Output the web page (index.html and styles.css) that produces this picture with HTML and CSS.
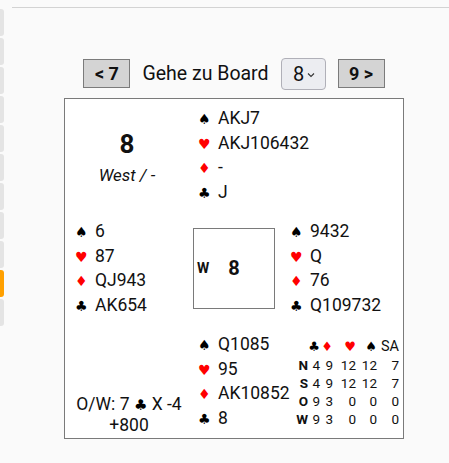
FILE: index.html
```html
<!DOCTYPE html>
<html lang="de">
<head>
<meta charset="utf-8">
<title>Board 8</title>
<link rel="stylesheet" href="styles.css">
</head>
<body>
<div class="page">
  <nav class="tabs">
    <span class="tab"></span><span class="tab"></span><span class="tab"></span><span class="tab"></span><span class="tab"></span>
    <span class="tab"></span><span class="tab"></span><span class="tab"></span><span class="tab"></span>
    <span class="tab active"></span><span class="tab"></span>
  </nav>
  <main class="main">
    <div class="boardnav">
      <button class="navbtn">&lt; 7</button>
      <span class="goto">Gehe zu Board</span>
      <span class="select"><span>8</span><svg class="chev" width="8" height="6" viewBox="0 0 8 6"><path d="M1 1.5 L4 4.5 L7 1.5" fill="none" stroke="#333" stroke-width="1.1"/></svg></span>
      <button class="navbtn">9 &gt;</button>
    </div>
    <div class="board">
      <div class="cell info">
        <div class="bnum">8</div>
        <div class="dealer">West / -</div>
      </div>
      <div class="cell hand north">
        <div class="row"><span class="s blk">♠</span>AKJ7</div>
        <div class="row"><span class="s red">♥</span>AKJ106432</div>
        <div class="row"><span class="s red">♦</span>-</div>
        <div class="row"><span class="s blk">♣</span>J</div>
      </div>
      <div class="cell"></div>

      <div class="cell hand west">
        <div class="row"><span class="s blk">♠</span>6</div>
        <div class="row"><span class="s red">♥</span>87</div>
        <div class="row"><span class="s red">♦</span>QJ943</div>
        <div class="row"><span class="s blk">♣</span>AK654</div>
      </div>
      <div class="cell center">
        <div class="compass">
          <span class="dir">W</span>
          <span class="cnum">8</span>
          <span></span>
        </div>
      </div>
      <div class="cell hand east">
        <div class="row"><span class="s blk">♠</span>9432</div>
        <div class="row"><span class="s red">♥</span>Q</div>
        <div class="row"><span class="s red">♦</span>76</div>
        <div class="row"><span class="s blk">♣</span>Q109732</div>
      </div>

      <div class="cell result">
        <div>O/W: 7 <span class="blk">♣</span> X -4</div>
        <div>+800</div>
      </div>
      <div class="cell hand south">
        <div class="row"><span class="s blk">♠</span>Q1085</div>
        <div class="row"><span class="s red">♥</span>95</div>
        <div class="row"><span class="s red">♦</span>AK10852</div>
        <div class="row"><span class="s blk">♣</span>8</div>
      </div>
      <div class="cell dd">
        <div class="ddgrid">
          <span></span><span class="h blk">♣</span><span class="h red">♦</span><span class="h red">♥</span><span class="h blk">♠</span><span class="h">SA</span>
          <span class="lbl">N</span><span>4</span><span>9</span><span>12</span><span>12</span><span>7</span>
          <span class="lbl">S</span><span>4</span><span>9</span><span>12</span><span>12</span><span>7</span>
          <span class="lbl">O</span><span>9</span><span>3</span><span>0</span><span>0</span><span>0</span>
          <span class="lbl">W</span><span>9</span><span>3</span><span>0</span><span>0</span><span>0</span>
        </div>
      </div>
    </div>
  </main>
</div>
</body>
</html>
```

FILE: styles.css
```css
html, body {
  margin: 0;
  padding: 0;
  background: #fafafa;
  font-family: Roboto, "Liberation Sans", Arial, sans-serif;
  color: #111;
}

.page {
  display: flex;
  width: 449px;
  height: 463px;
  overflow: hidden;
}

.tabs {
  width: 12px;
  flex: none;
  display: flex;
  flex-direction: column;
  gap: 2px;
  padding-top: 9px;
}

.tab {
  display: block;
  width: 4px;
  height: 27px;
  background: #e4e4e4;
  border-radius: 0 3px 3px 0;
}

.tab.active {
  background: #ffa000;
}

.main {
  flex: 1;
  margin-top: 7px;
  border-top: 1px solid #d3d3d3;
  padding-left: 7px;
  display: flex;
  flex-direction: column;
  align-items: center;
}

.boardnav {
  display: flex;
  align-items: center;
  margin-top: 49px;
  height: 33px;
}

.navbtn {
  width: 47px;
  height: 29px;
  padding: 0;
  background: #d4d4d4;
  border: 1px solid #7b7b7b;
  border-radius: 0;
  font-family: Roboto, "Liberation Sans", Arial, sans-serif;
  font-weight: 700;
  font-size: 18px;
  color: #111;
}

.goto {
  font-size: 19.5px;
  margin: 0 12px 0 12px;
}

.select {
  display: flex;
  align-items: center;
  justify-content: center;
  gap: 3px;
  width: 45px;
  height: 32px;
  margin-right: 12px;
  background: #ecedf1;
  border: 1px solid #b0b0b8;
  border-radius: 4px;
  font-size: 20px;
  padding-left: 2px;
  box-sizing: border-box;
}

.chev {
  margin-top: 2px;
}

.board {
  margin-top: 8px;
  width: 340px;
  box-sizing: border-box;
  border: 1px solid #7a7a7a;
  background: #fff;
  display: grid;
  grid-template-columns: 128px 82px 128px;
  grid-template-rows: 100px 100px 100px;
  row-gap: 13px;
  padding: 7px 0 6px;
}

.cell {
  min-width: 0;
}

.hand {
  font-size: 17.5px;
}

.row {
  height: 24.7px;
  line-height: 24.7px;
  white-space: nowrap;
}

.s {
  display: inline-block;
  width: 20px;
  font-size: 14px;
  font-family: "DejaVu Sans", sans-serif;
}

.blk { color: #000; }
.red { color: #f00; }

.west { padding-left: 10px; }
.north, .south { padding-left: 5px; }
.east { padding-left: 15px; }

.info {
  display: flex;
  flex-direction: column;
  align-items: center;
  justify-content: center;
  padding-right: 4px;
  padding-top: 2px;
}

.bnum {
  font-weight: 700;
  font-size: 26px;
  line-height: 30px;
}

.dealer {
  font-style: italic;
  font-size: 17px;
  line-height: 20px;
  margin-top: 6px;
}

.center {
  display: flex;
  align-items: center;
}

.compass {
  width: 82px;
  height: 81px;
  box-sizing: border-box;
  border: 1px solid #7a7a7a;
  display: grid;
  grid-template-columns: 1fr auto 1fr;
  align-items: center;
  margin-top: -2px;
}

.dir {
  font-weight: 700;
  font-size: 14px;
  padding-left: 3px;
}

.cnum {
  font-weight: 700;
  font-size: 20px;
}

.result {
  display: flex;
  flex-direction: column;
  justify-content: flex-end;
  align-items: center;
  font-size: 17.5px;
  line-height: 20px;
  padding-left: 0;
  margin-bottom: -3px;
}

.result .blk {
  font-family: "DejaVu Sans", sans-serif;
  font-size: 15px;
}

.dd {
  padding: 6px 0 0 19px;
}

.ddgrid {
  display: grid;
  grid-template-columns: 14px 12px 13px 23px 21px 22px;
  grid-auto-rows: 18px;
  line-height: 18px;
  font-size: 13.5px;
  justify-items: end;
}

.ddgrid .h {
  font-size: 14.5px;
}

.ddgrid .h.blk, .ddgrid .h.red {
  font-family: "DejaVu Sans", sans-serif;
  font-size: 13px;
}

.lbl {
  font-weight: 700;
}
```
